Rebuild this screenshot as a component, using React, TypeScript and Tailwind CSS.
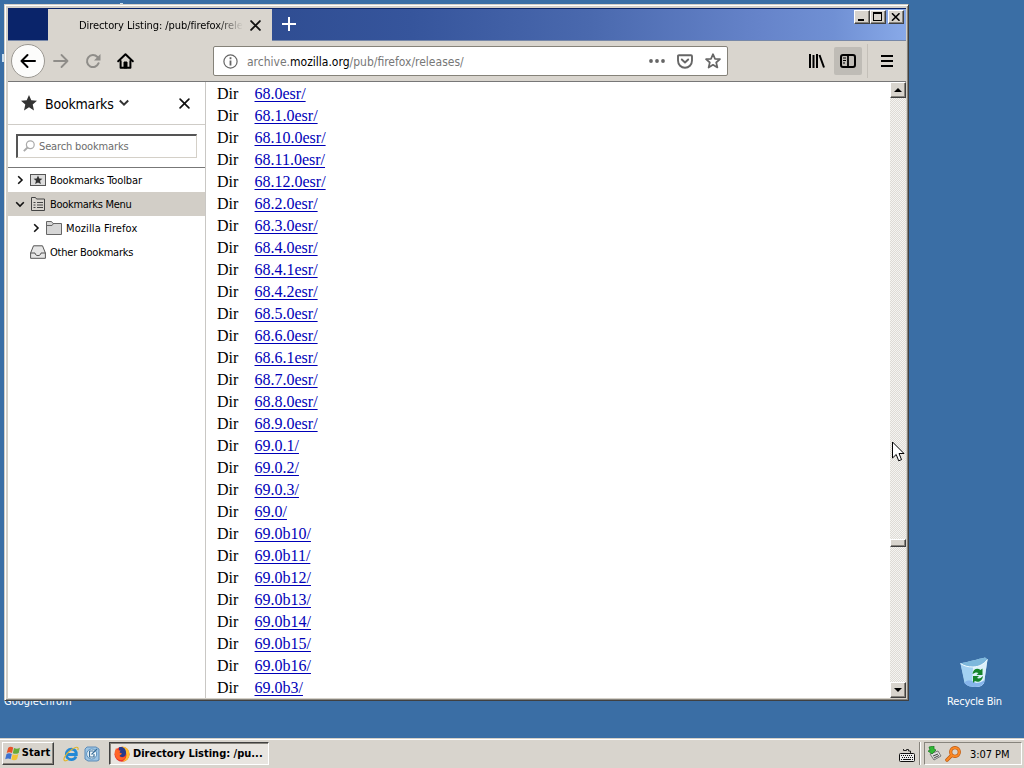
import type { ReactNode } from "react";

const releases = [
  "68.0esr/", "68.1.0esr/", "68.10.0esr/", "68.11.0esr/", "68.12.0esr/", "68.2.0esr/", "68.3.0esr/",
  "68.4.0esr/", "68.4.1esr/", "68.4.2esr/", "68.5.0esr/", "68.6.0esr/", "68.6.1esr/", "68.7.0esr/",
  "68.8.0esr/", "68.9.0esr/", "69.0.1/", "69.0.2/", "69.0.3/", "69.0/", "69.0b10/", "69.0b11/",
  "69.0b12/", "69.0b13/", "69.0b14/", "69.0b15/", "69.0b16/", "69.0b3/",
];

function BackIcon() {
  return (
    <svg width="16" height="16" viewBox="0 0 16 16" fill="none" stroke="#000" strokeWidth="2" strokeLinecap="round" strokeLinejoin="round">
      <path d="M15 8H1.5M7.5 2L1.5 8l6 6" />
    </svg>
  );
}

function ForwardIcon() {
  return (
    <svg width="16" height="16" viewBox="0 0 16 16" fill="none" stroke="#8f8d89" strokeWidth="1.8" strokeLinecap="round" strokeLinejoin="round">
      <path d="M1 8h13.5M8.5 2l6 6-6 6" />
    </svg>
  );
}

function ReloadIcon() {
  return (
    <svg width="16" height="16" viewBox="0 0 16 16" fill="none" stroke="#8f8d89" strokeWidth="2">
      <path d="M13.6 10.2A6 6 0 1 1 12.4 4" strokeLinecap="round" />
      <path d="M15.5 1v6.5H9z" fill="#8f8d89" stroke="none" />
    </svg>
  );
}

function HomeIcon() {
  return (
    <svg width="17" height="16" viewBox="0 0 17 16" fill="none" stroke="#000" strokeWidth="2" strokeLinejoin="round" strokeLinecap="round">
      <path d="M1.2 8.2L8.5 1.2l7.3 7" />
      <path d="M3.6 8v6.8h9.8V8" />
      <path d="M7 14.5V9h3v5.5z" fill="#000" strokeWidth="1" />
    </svg>
  );
}

function Cross({ size, w }: { size: number; w: number }) {
  return (
    <svg width={size} height={size} viewBox="0 0 10 10" stroke="#111" strokeWidth={w} strokeLinecap="round">
      <path d="M1 1l8 8M9 1l-8 8" />
    </svg>
  );
}

function Chevron({ down = false }: { down?: boolean }) {
  return (
    <svg width="10" height="10" viewBox="0 0 10 10" fill="none" stroke="#111" strokeWidth="1.6">
      <path d={down ? "M1.2 3.2L5 7l3.8-3.8" : "M3.2 1.2L7 5 3.2 8.8"} />
    </svg>
  );
}

function ToolbarFolderIcon() {
  return (
    <svg width="16" height="14" viewBox="0 0 16 14">
      <rect x=".5" y="1.5" width="15" height="11" fill="#dcdcdc" stroke="#555" />
      <path d="M8 2.600l1.300 3 3.100.2L10 7.800l.9 3.200L8 9.400 5.100 11l.9-3.200-2.400-2 3.100-.2z" fill="#333" />
    </svg>
  );
}

function MenuFolderIcon() {
  return (
    <svg width="16" height="14" viewBox="0 0 16 14" stroke="#444" fill="none">
      <path d="M1.5 13.5v-13h4l1 1.500h8v11.500z" fill="#d8d5cf" />
      <path d="M3.5 5.5h2M7 5.5h6M3.5 8h2M7 8h6M3.5 10.5h2M7 10.5h6" />
    </svg>
  );
}

function FolderIcon() {
  return (
    <svg width="16" height="14" viewBox="0 0 16 14" stroke="#666" fill="#d6d6d6">
      <path d="M.5 13.500v-13h5l1.500 2h8.500v11z" />
      <path d="M.5 4.500H6l1.500-2" fill="none" />
    </svg>
  );
}

function TrayFolderIcon() {
  return (
    <svg width="16" height="14" viewBox="0 0 16 14" stroke="#555" fill="#e6e6e6" strokeLinejoin="round">
      <path d="M.6 8L3.5.8h9L15.4 8v5.3H.6z" />
      <path d="M.6 8H5c.2 1.8 1.4 2.6 3 2.6S10.800 9.800 11 8h4.400" fill="none" />
    </svg>
  );
}

function BevelButton({ children, className }: { children: ReactNode; className: string }) {
  return (
    <div className={`flex shrink-0 items-center justify-center border border-t-white border-l-white border-r-[#404040] border-b-[#404040] bg-[#d8d4cd] shadow-[inset_-1px_-1px_0_#87847d] ${className}`}>
      {children}
    </div>
  );
}

function TitleBar() {
  return (
    <div className="flex h-[33px] shrink-0 border-t border-t-[#0a246a] border-b border-b-[#7788a8] bg-[linear-gradient(90deg,#0a246a_0%,#0a246a_4%,#2f4d92_29%,#36559c_45%,#4a69ae_65%,#6684ca_84%,#7090d4_92%,#88a9e8_100%)]">
      <div className="ml-10 flex h-[33px] w-56 shrink-0 items-center bg-[#d9d5ce]">
        <div className="ml-[31px] mt-[1px] w-[164px] whitespace-nowrap text-[11px] tracking-[-0.08px] [mask-image:linear-gradient(90deg,#000_84%,transparent_100%)]">
          Directory Listing: /pub/firefox/rele
        </div>
        <div className="ml-[7px]"><Cross size={11} w={1.7} /></div>
      </div>
      <div className="ml-[10px] mt-2">
        <svg width="14" height="14" viewBox="0 0 14 14" stroke="#fff" strokeWidth="2"><path d="M7 0v14M0 7h14" /></svg>
      </div>
      <div className="ml-auto mr-[2px] mt-[1px] flex">
        <BevelButton className="h-[14px] w-4">
          <svg width="12" height="10" viewBox="0 0 12 10"><path d="M2 7h6v2H2z" /></svg>
        </BevelButton>
        <BevelButton className="h-[14px] w-4">
          <svg width="12" height="10" viewBox="0 0 12 10"><path d="M1 0h9v9H1zM2 2v6h7V2z" fillRule="evenodd" /></svg>
        </BevelButton>
        <BevelButton className="ml-[2px] h-[14px] w-4">
          <svg width="10" height="8" viewBox="0 0 10 8" stroke="#000" strokeWidth="1.6"><path d="M1 .3l7.500 7.400M8.500.3L1 7.700" /></svg>
        </BevelButton>
      </div>
    </div>
  );
}

function NavBar() {
  return (
    <div className="flex h-[41px] shrink-0 items-center border-b border-b-[#777] bg-[#d9d5ce]">
      <div className="ml-[3px] flex size-[34px] items-center justify-center rounded-full border border-[#9b9892] bg-[#fcfcfb]"><BackIcon /></div>
      <div className="ml-2"><ForwardIcon /></div>
      <div className="ml-4"><ReloadIcon /></div>
      <div className="ml-4"><HomeIcon /></div>
      <div className="ml-[79px] flex h-[30px] w-[515px] items-center rounded-[2px] border border-[#858279] bg-white">
        <svg className="ml-[9px]" width="15" height="15" viewBox="0 0 15 15" fill="none" stroke="#666">
          <circle cx="7.500" cy="7.500" r="6.600" strokeWidth="1.200" />
          <path d="M7.500 6.500v5M7.500 3.300v2" strokeWidth="1.800" />
        </svg>
        <div className="ml-[9px] mt-[1px] whitespace-nowrap text-[12px] text-[#777]">
          archive.<span className="text-black">mozilla.org</span>/pub/firefox/releases/
        </div>
        <svg className="ml-auto" width="16" height="4" viewBox="0 0 16 4" fill="#666"><circle cx="2" cy="2" r="1.900" /><circle cx="8" cy="2" r="1.900" /><circle cx="14" cy="2" r="1.900" /></svg>
        <svg className="ml-3" width="16" height="15" viewBox="0 0 16 15" fill="none" stroke="#666" strokeWidth="1.900" strokeLinejoin="round" strokeLinecap="round">
          <path d="M2 1.200h12c.7 0 1 .4 1 1V6.500c0 4.300-3.200 7.300-7 7.300S1 10.800 1 6.500V2.200c0-.6.3-1 1-1z" />
          <path d="M4.800 5.500L8 8.500l3.200-3" />
        </svg>
        <svg className="ml-3 mr-[6px]" width="16" height="16" viewBox="0 0 16 16" fill="none" stroke="#666" strokeWidth="1.700" strokeLinejoin="round">
          <path d="M8 1.200l2 4.600 5 .4-3.800 3.300 1.200 5L8 11.800l-4.400 2.700 1.200-5L1 6.200l5-.4z" />
        </svg>
      </div>
      <svg className="ml-[81px]" width="16" height="14" viewBox="0 0 16 14" stroke="#000" strokeWidth="2"><path d="M1 0v14M4.500 1v13M8 0v14M10.500 1l4.500 12.500" /></svg>
      <div className="ml-[9px] flex h-7 w-7 items-center justify-center rounded-[2px] bg-[#bfbcb6]">
        <svg width="16" height="14" viewBox="0 0 16 14" fill="none" stroke="#000" strokeWidth="2">
          <rect x="1" y="1" width="14" height="12" rx="2" />
          <path d="M8 1v12" strokeWidth="1.800" /><path d="M3 4h3M3 6.500h3M3 9h2" strokeWidth="1" />
        </svg>
      </div>
      <div className="ml-[5px] h-[34px] w-px bg-[#c4c0b9]" />
      <svg className="ml-[13px]" width="12" height="12" viewBox="0 0 12 12" stroke="#000" strokeWidth="2"><path d="M0 1h12M0 6h12M0 11h12" /></svg>
    </div>
  );
}

function Sidebar() {
  return (
    <aside className="flex w-[198px] shrink-0 flex-col border-r border-r-[#c9c7c4] bg-white">
      <div className="flex h-[43px] shrink-0 items-center border-b border-b-[#cfccc7]">
        <svg className="ml-[13px]" width="16" height="16" viewBox="0 0 16 16" fill="#333"><path d="M8 0l2.300 5.200 5.700.5-4.300 3.800L13 15.500 8 12.300 3 15.500l1.300-6L0 5.700l5.700-.5z" /></svg>
        <div className="ml-2 mt-[2px] text-[14px] leading-[18px] tracking-[-0.2px]">Bookmarks</div>
        <svg className="ml-[5px]" width="10" height="8" viewBox="0 0 10 8" fill="none" stroke="#333" strokeWidth="2"><path d="M.8 1.500L5 5.700l4.200-4.200" /></svg>
        <div className="ml-auto mr-[15px] flex"><Cross size={11} w={1.500} /></div>
      </div>
      <div className="flex h-[43px] shrink-0 items-center border-b border-b-[#777] pl-2">
        <div className="flex h-6 w-[181px] items-center border border-t-2 border-t-[#555] border-l-2 border-l-[#555] border-r-[#d4d0c8] border-b-[#d4d0c8]">
          <svg className="mb-[2px] ml-[5px]" width="12" height="12" viewBox="0 0 12 12" fill="none" stroke="#aaa" strokeWidth="1.200"><circle cx="7.300" cy="4.700" r="3.900" /><path d="M4.500 7.500L.8 11.200" strokeWidth="1.800" /></svg>
          <div className="ml-1 mt-[1px] text-[11px] tracking-[-0.15px] text-[#6d6d6d]">Search bookmarks</div>
        </div>
      </div>
      <div className="flex flex-col text-[11px] tracking-[-0.12px]">
        <div className="flex h-6 items-center pl-[7px]"><Chevron /><span className="ml-[5px]"><ToolbarFolderIcon /></span><span className="ml-1 mt-[3px]">Bookmarks Toolbar</span></div>
        <div className="flex h-6 items-center bg-[#d2cec7] pl-[7px] tracking-[-0.3px]"><Chevron down /><span className="ml-[5px]"><MenuFolderIcon /></span><span className="ml-1 mt-[3px]">Bookmarks Menu</span></div>
        <div className="flex h-6 items-center pl-[23px] tracking-[0.1px]"><Chevron /><span className="ml-[5px]"><FolderIcon /></span><span className="ml-1 mt-[3px]">Mozilla Firefox</span></div>
        <div className="flex h-6 items-center pl-[22px] tracking-[-0.22px]"><TrayFolderIcon /><span className="ml-1 mt-[3px]">Other Bookmarks</span></div>
      </div>
    </aside>
  );
}

function ScrollBar() {
  return (
    <div className="flex w-4 shrink-0 flex-col bg-[conic-gradient(#dedbd5_25%,#f5f4f1_0_50%,#dedbd5_0_75%,#f5f4f1_0)] bg-[length:2px_2px]">
      <BevelButton className="h-4 w-4"><svg width="8" height="4" viewBox="0 0 8 4"><path d="M0 4l4-4 4 4z" /></svg></BevelButton>
      <BevelButton className="mt-[441px] h-2 w-4"><span /></BevelButton>
      <BevelButton className="mt-auto h-4 w-4"><svg width="8" height="4" viewBox="0 0 8 4"><path d="M0 0h8L4 4z" /></svg></BevelButton>
    </div>
  );
}

function BrowserWindow() {
  return (
    <div className="flex h-[697px] w-[905px] flex-col border border-t-[#d4d0c8] border-l-[#d4d0c8] border-r-[#404040] border-b-[#404040] bg-[#d4d0c8] p-[3px] pb-[2px] pr-[2px] shadow-[inset_1px_1px_0_#fff,inset_-1px_-1px_0_#87847d]">
      <TitleBar />
      <NavBar />
      <div className="flex min-h-0 flex-1 bg-white">
        <Sidebar />
        <main className="flex-1 overflow-hidden pl-[11px] pt-[1px] font-['Liberation_Serif',serif] text-[16px] leading-[22px]">
          {releases.map((name) => (
            <div key={name} className="flex h-[22px]">
              <span className="w-[37.5px]">Dir</span>
              <a className="text-[#0000b8] underline decoration-1 underline-offset-2">{name}</a>
            </div>
          ))}
        </main>
        <ScrollBar />
      </div>
    </div>
  );
}

function RecycleBin() {
  return (
    <div className="flex w-16 flex-col items-center text-white">
      <svg width="30" height="34" viewBox="0 0 30 34">
        <path d="M1.500 7.500C8 6 20 3 26 1.500l2.500 2L25 27c-2 3-5 4-9 4-4 0-8-1-10-4z" fill="#b5daf4" />
        <path d="M1.500 7.500C8 6 20 3 26 1.500l2.500 2C25 8 20 11 14 11 8 11 4 10 1.500 7.500z" fill="#7db8dc" />
        <path d="M1.500 7.500C5 10 9 11 14 11l-1 19c-3 0-6-1-7.500-3z" fill="#a3d2f2" />
        <path d="M14 11c6 0 11-3 14.500-7.500L25 27c-2 3-5 4-9 4l-3-.5z" fill="#dcf1fb" />
        <path d="M6 26c4-3 8-1 11 1 3 0 6-1 8.500-3L25 27c-2 3-5 4-9 4-4 0-8-1-10.500-4z" fill="#86b4ea" />
        <path d="M1.500 7.500C5 10 9 11 14 11c6 0 11-3 14.500-7.500" fill="none" stroke="#f1fbff" />
        <path d="M13.500 18c.5-5 5-6.500 8-4l2-1.500V19h-6l2-2c-2-1-3.500-.5-6 1zM24 20c-.5 5-5 7-8 5l-2 2v-7h6l-2 2c2 1 3.500.5 6-2z" fill="#16852c" />
      </svg>
      <span className="mt-[5px] whitespace-nowrap pl-px text-[11px] leading-[14px] tracking-[-0.2px]">Recycle Bin</span>
    </div>
  );
}

function FirefoxIcon() {
  return (
    <svg width="16" height="16" viewBox="0 0 16 16">
      <circle cx="8" cy="8.300" r="7.500" fill="#e8352e" />
      <path d="M8 .5c4 0 7.500 3 7.500 7.500 0 5-3.500 7.600-7.500 7.600 4-2 5-5 4-9C11.500 4 8 3.500 8 .5z" fill="#ffbd2e" />
      <path d="M5 1.500C9 0 12 3 12 6.500S10 11 8 11 4.500 9 5 7z" fill="#273b8c" />
      <path d="M.7 6L2 2l2 2.200 2.500.4-1 2 2.500 1-1 1.200c-2 .3-2 2 .2 2.500 2 .5 3.500-.3 4.500-1.500-.5 3.500-3 4.700-5.500 4.200C3 13.500.7 10.500.7 6z" fill="#ff6527" />
    </svg>
  );
}

function Taskbar() {
  return (
    <footer className="flex h-[30px] shrink-0 items-center border-t border-t-[#d4d0c8] bg-[#d8d4cd] pl-[2px] shadow-[inset_0_1px_0_#fff]">
      <BevelButton className="h-[23px] w-[52px] gap-[1px]">
        <svg className="-ml-px" width="16" height="15" viewBox="0 0 16 15">
          <path d="M3.200 1.700C5 .3 6.500.5 8.200 1.600L7 7C5 6 3.500 6 1.700 7z" fill="#e65329" />
          <path d="M9 1.900c2 1 3.700 1 5.900-.2L13.700 7c-2 1-3.800 1.200-5.900.3z" fill="#67ab37" />
          <path d="M1.500 7.900C3.300 6.900 5 7 6.800 8l-1.200 5.200c-1.900-1-3.400-.9-5.400.1z" fill="#3d71cf" />
          <path d="M7.600 8.200c2 1 3.800.8 5.800-.2l-1.300 5.300c-2 1.100-3.800 1.200-5.700.2z" fill="#f3c333" />
        </svg>
        <span className="text-[11px] font-bold tracking-[0.1px]">Start</span>
      </BevelButton>
      <svg className="ml-[9px] mt-px" width="16" height="16" viewBox="0 0 16 16" fill="none">
        <path d="M13 10.500c-.8 2-2.500 3.200-4.700 3.200-3 0-5-2.300-5-5.300s2-5.200 5-5.200 5 2 5 5.300H4" stroke="#2389d6" strokeWidth="2.800" />
        <path d="M14.800 4c1-2.500-.6-3.300-3-2.300C6.500 3.500.5 11 1 13.800c.3 1.600 2.600 1 4-.2" stroke="#e2b52e" strokeWidth="1.200" />
      </svg>
      <svg className="ml-[5px] mt-px" width="16" height="16" viewBox="0 0 16 16" fill="none">
        <path d="M3 1h9l3 2v11l-2 1H4l-3-2V3z" fill="#9cc4e4" stroke="#5c8bb8" />
        <circle cx="7.700" cy="8" r="5" fill="#f4fafd" stroke="#5a8fbb" />
        <path d="M9.500 5H5.500v6H10V8M7.500 8.500L13 3" stroke="#386d98" strokeWidth="1.200" />
      </svg>
      <div className="ml-[9px] flex h-[23px] w-[160px] items-center border border-t-[#404040] border-l-[#404040] border-r-white border-b-white bg-[#e8e5e0] pl-[4px] shadow-[inset_1px_1px_0_#87847d]">
        <FirefoxIcon />
        <span className="ml-[3px] mt-[2px] whitespace-nowrap text-[11px] font-bold">Directory Listing: /pu...</span>
      </div>
      <svg className="ml-auto mt-[3px]" width="16" height="14" viewBox="0 0 16 14" fill="none" stroke="#111">
        <path d="M4.500 1v1.500h3v-1h2v1.500h2V5" strokeWidth=".9" /><rect x=".5" y="5.500" width="15" height="8" rx="1" fill="#eee" />
        <path d="M2 7.500h12M3 9.500h11" strokeDasharray="1 1" /><path d="M2 11.500h1M4 11.500h8M13 11.500h1" />
      </svg>
      <div className="ml-1 h-[23px] w-px bg-[#87847d]" />
      <div className="h-[23px] w-px bg-white" />
      <div className="ml-[3px] mr-[2px] flex h-[23px] w-[98px] items-center border border-t-[#87847d] border-l-[#87847d] border-r-white border-b-white pl-[2px]">
        <svg width="15" height="15" viewBox="0 0 15 15">
          <path d="M3 8l8-3 3 5-7 4z" fill="#ddd" stroke="#777" /><path d="M6 10l5-2M7 12l5-2.500" stroke="#444" />
          <path d="M2 1l5-1v3l2 1-4 4-4-3 2-.6z" fill="#31b936" stroke="#16751c" strokeWidth=".7" />
        </svg>
        <svg className="ml-[3px]" width="16" height="16" viewBox="0 0 16 16" fill="none" stroke="#bd5508" strokeLinecap="round">
          <circle cx="10" cy="6" r="4.300" strokeWidth="3.200" /><path d="M6.500 9.500L2 14" strokeWidth="3.500" />
          <circle cx="10" cy="6" r="4.300" stroke="#fb8926" strokeWidth="2" /><path d="M6.500 9.500L2 14" stroke="#fb8926" strokeWidth="2.200" />
        </svg>
        <span className="ml-[9px] mt-[3px] whitespace-nowrap text-[11px] tracking-[-0.05px]">3:07 PM</span>
      </div>
    </footer>
  );
}

export default function App() {
  return (
    <div className="relative flex h-[768px] w-[1024px] flex-col overflow-hidden bg-[#3a6ea5] font-['DejaVu_Sans_Condensed','DejaVu_Sans',sans-serif] text-black [font-stretch:condensed]">
      <div className="absolute left-1 top-[695px] text-[11px] leading-[14px] text-white">GoogleChrom</div>
      <div className="absolute left-[2px] top-[54px] h-2 w-[3px] bg-[#c9dff0]" />
      <div className="absolute left-[120px] top-[3px] h-[2px] w-[3px] bg-[#c9dff0]" />
      <div className="relative flex min-h-0 flex-1 items-start pl-1 pt-1">
        <BrowserWindow />
        <div className="ml-[33px] mt-[652px]"><RecycleBin /></div>
        <svg className="absolute left-[892px] top-[441px]" width="13" height="22" viewBox="0 0 13 22"><path d="M.5 1v16l3.700-3.500 2.500 6.300 2.800-1.200L7 12.500h5z" fill="#fff" stroke="#000" /></svg>
      </div>
      <Taskbar />
    </div>
  );
}
